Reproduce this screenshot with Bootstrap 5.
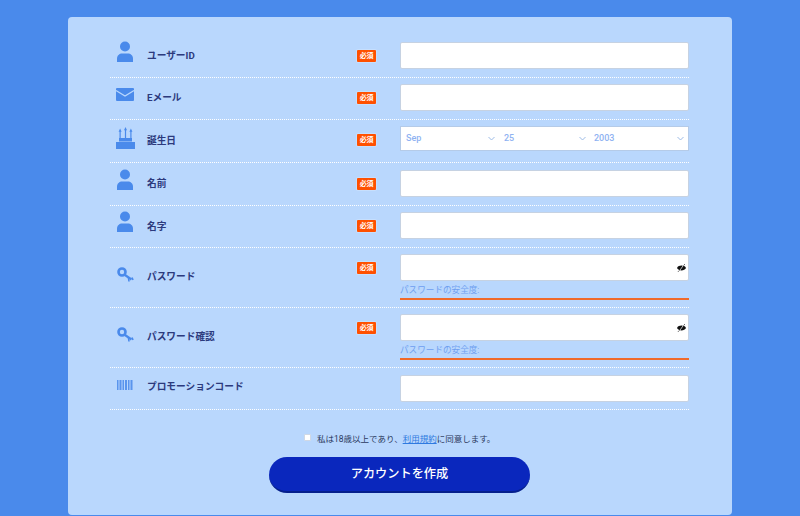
<!DOCTYPE html>
<html lang="ja"><head><meta charset="utf-8">
<link href="https://cdn.jsdelivr.net/npm/bootstrap@5.3.0/dist/css/bootstrap.min.css" rel="stylesheet">
<style>
html,body{height:516px;overflow:hidden}
body{background:#4a8aeb;font-family:"Roboto","Noto Sans CJK JP",sans-serif;padding-top:17px}
.panel{width:664px;height:498px;margin-left:68px;background:#b9d7fd;border-radius:4px;padding:19px 43px 0 42px}
.frow{border-bottom:1px dotted #fff;display:flex;align-items:flex-start;padding-top:6px;height:42px}
.frow.h43{height:43px}
.frow.tall{height:60px}
.frow.pad7{padding-top:7px}
.ico{width:30px;flex:none;display:flex;justify-content:center;color:#4a8aeb;margin-right:7px}
.ico-person{margin-top:-1px}
.ico-mail{margin-top:4px}
.ico-cake{margin-top:1px}
.ico-key{margin-top:13px}
.ico-bar{margin-top:5px}
.lbl{width:210px;flex:none;font-size:9.7px;font-weight:700;color:#2c3a7d;line-height:14px;margin-top:7px}
.lbl-b{margin-top:8px}
.lbl-tall{margin-top:16px}
.lbl-promo{margin-top:5px}
.req{width:19px;height:12px;flex:none;background:#ff5000;color:#fff;font-size:7px;font-weight:700;line-height:12px;text-align:center;border-radius:1px;box-shadow:0 0 0 1px rgba(255,255,255,.2);margin-top:8px;margin-right:24px;white-space:nowrap;letter-spacing:-.2px}
.fld{width:289px;flex:none;margin-left:auto}
.inp{height:27px;background:#fff;border:1px solid #c6d2e2;border-radius:2px;position:relative}
.eye{position:absolute;right:2px;top:9px;color:#111}
.sels{height:25px;background:#fff;border:1px solid #b5cbe8;display:flex;font-size:9px;color:#8fb3f2;line-height:23px;font-weight:500}
.sels>div{display:flex;justify-content:space-between;align-items:center}
.sels svg{color:#9dbbe6}
.sel-m{width:97px;padding:0 3px 0 5px}
.sel-d{width:91px;padding:0 3px 0 6px}
.sel-y{flex:1;padding:0 4px 0 5px}
.strength{font-size:8.6px;color:#6f9ff0;line-height:12px;margin-top:3px;height:12px}
.sbar{height:2px;background:#f06a2a;margin-top:2px}
.agree{font-size:8.5px;color:#2c3a5d;line-height:14px;margin-top:22px;margin-left:194px;display:flex;align-items:center}
.cbox{width:7px;height:7px;background:#fff;border:1px solid #d0d8e4;border-radius:1px;margin-right:6px;flex:none;margin-top:-3px}
.agree a{color:#2f7ae0}
.cta{display:block;width:261px;height:36px;margin:11px 0 0 159px;padding:0;border:0;border-bottom:2px solid #051f8c;border-radius:18px;background:#0a27bd;color:#fff;font-size:12.2px;font-weight:500;font-family:inherit;line-height:32px}
</style></head><body>
<svg width="0" height="0" class="d-block position-absolute"><defs>
<symbol id="i-person" viewBox="0 0 16 22"><circle cx="8" cy="5.500" r="5" fill="currentColor"/><path fill="currentColor" d="M0 21v-3.500c0-3 2.500-5 5-5h6c2.500 0 5 2 5 5V21z"/></symbol>
<symbol id="i-key" viewBox="0 0 17 15"><circle cx="5" cy="5" r="3.500" fill="none" stroke="currentColor" stroke-width="2.600"/><path d="M8 8l6.500 4.500" stroke="currentColor" stroke-width="2.200" fill="none"/><path d="M11.500 11l.5 3.500M15 10.500l1 2.500" stroke="currentColor" stroke-width="1.600" fill="none"/></symbol>
<symbol id="i-chev" viewBox="0 0 7 5"><path d="M.5 1l3 3 3-3" fill="none" stroke="currentColor"/></symbol>
<symbol id="i-eye" viewBox="0 0 9 8"><path fill="currentColor" d="M0 4C1.500.8 7.500.8 9 4 7.500 7.200 1.500 7.200 0 4z"/><path d="M2 7.500l5-7" stroke="#fff" stroke-width=".7"/><path d="M1 7.800l1.500-1.500M6.500 1.500L8 .2" stroke="currentColor" stroke-width=".7"/></symbol>
</defs></svg>
<div class="panel">
<div class="frow"><div class="ico ico-person"><svg width="16" height="22"><use href="#i-person"/></svg></div><div class="lbl">ユーザーID</div><div class="req">必須</div><div class="fld"><div class="inp"></div></div></div>
<div class="frow"><div class="ico ico-mail"><svg width="18" height="13" viewBox="0 0 18 13"><path fill="currentColor" d="M0 1q0-1 1-1h16q1 0 1 1v11q0 1-1 1H1q-1 0-1-1z"/><path d="M0 2.500l9 5.500 9-5.500" fill="none" stroke="#b9d7fd" stroke-width="1.300"/></svg></div><div class="lbl">Eメール</div><div class="req">必須</div><div class="fld"><div class="inp"></div></div></div>
<div class="frow h43"><div class="ico ico-cake"><svg width="19" height="22" viewBox="0 0 19 22" fill="currentColor"><rect y="15" width="19" height="7"/><rect x="3" y="11" width="13" height="3.500"/><rect x="3.500" y="4" width="1.200" height="8"/><rect x="8.900" y="3" width="1.200" height="9"/><rect x="14.300" y="4" width="1.200" height="8"/><path d="M4.100 1.500l1.500 3.200H2.600zM9.500 0l1.500 3.200H8zM14.900 1.500l1.500 3.200h-3z"/></svg></div><div class="lbl lbl-b">誕生日</div><div class="req">必須</div><div class="fld"><div class="sels"><div class="sel-m">Sep<svg width="7" height="5"><use href="#i-chev"/></svg></div><div class="sel-d">25<svg width="7" height="5"><use href="#i-chev"/></svg></div><div class="sel-y">2003<svg width="7" height="5"><use href="#i-chev"/></svg></div></div></div></div>
<div class="frow h43 pad7"><div class="ico ico-person"><svg width="16" height="22"><use href="#i-person"/></svg></div><div class="lbl">名前</div><div class="req">必須</div><div class="fld"><div class="inp"></div></div></div>
<div class="frow"><div class="ico ico-person"><svg width="16" height="22"><use href="#i-person"/></svg></div><div class="lbl lbl-b">名字</div><div class="req">必須</div><div class="fld"><div class="inp"></div></div></div>
<div class="frow tall"><div class="ico ico-key"><svg width="17" height="15"><use href="#i-key"/></svg></div><div class="lbl lbl-tall">パスワード</div><div class="req">必須</div><div class="fld"><div class="inp"><svg class="eye" width="9" height="8"><use href="#i-eye"/></svg></div><div class="strength">パスワードの安全度:</div><div class="sbar"></div></div></div>
<div class="frow tall"><div class="ico ico-key"><svg width="17" height="15"><use href="#i-key"/></svg></div><div class="lbl lbl-tall">パスワード確認</div><div class="req">必須</div><div class="fld"><div class="inp"><svg class="eye" width="9" height="8"><use href="#i-eye"/></svg></div><div class="strength">パスワードの安全度:</div><div class="sbar"></div></div></div>
<div class="frow pad7"><div class="ico ico-bar"><svg width="16" height="10" viewBox="0 0 16 10" fill="currentColor" opacity=".85"><rect width="1.500" height="10"/><rect x="2.500" width="2" height="10"/><rect x="5.500" width="1.500" height="10"/><rect x="8" width="2" height="10"/><rect x="11" width="1.500" height="10"/><rect x="13.500" width="2" height="10"/></svg></div><div class="lbl lbl-promo">プロモーションコード</div><div class="fld"><div class="inp"></div></div></div>
<div class="agree"><span class="cbox"></span><span>私は18歳以上であり、<a href="#">利用規約</a>に同意します。</span></div>
<button class="cta" type="button">アカウントを作成</button>
</div>
</body></html>
